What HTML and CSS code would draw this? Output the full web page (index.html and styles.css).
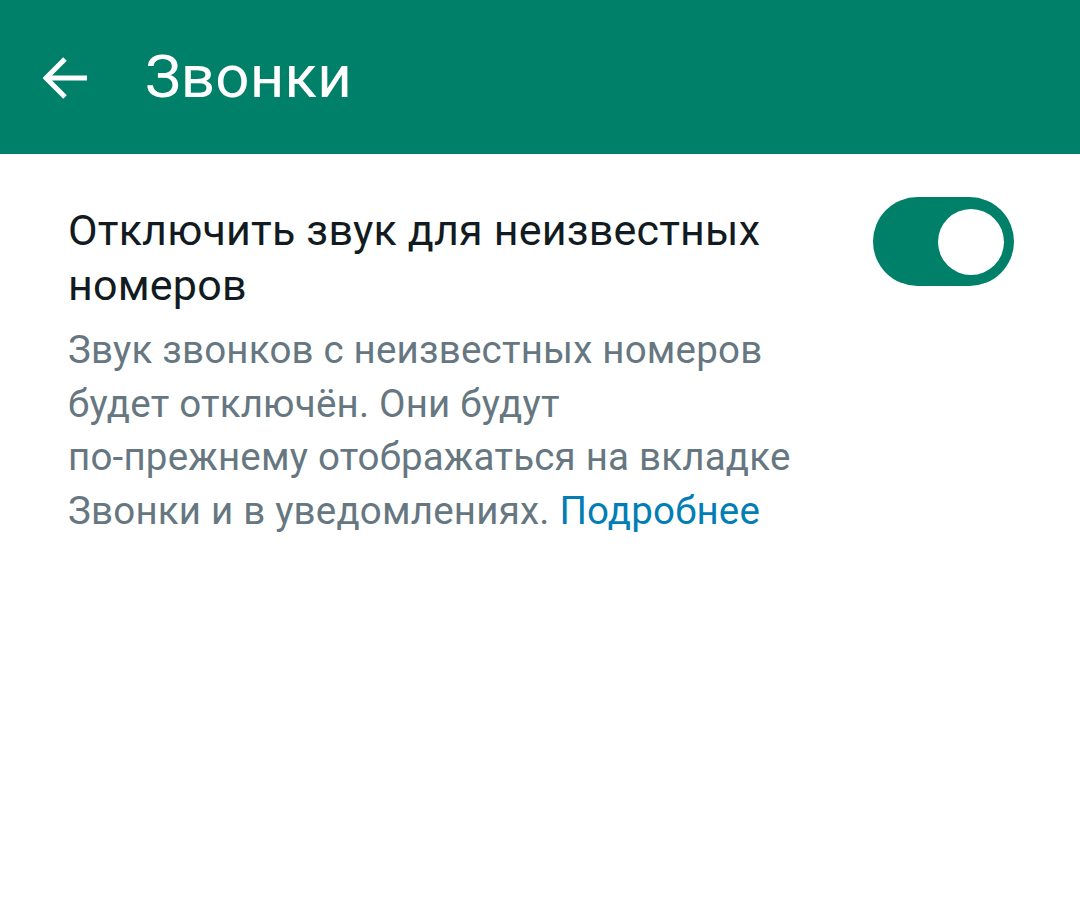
FILE: index.html
```html
<!DOCTYPE html>
<html lang="ru">
<head>
<meta charset="utf-8">
<link rel="stylesheet" href="styles.css">
</head>
<body>
<header class="appbar">
  <svg class="back" width="46" height="44" viewBox="0 0 46 44" aria-hidden="true">
    <path d="M44 22H4 M22 3L3 22L22 41" fill="none" stroke="#fff" stroke-width="5" stroke-linecap="butt" stroke-linejoin="miter"/>
  </svg>
  <h1 class="title">Звонки</h1>
</header>
<main class="content">
  <div class="setting">
    <div class="texts">
      <div class="setting-title">Отключить звук для неизвестных<br>номеров</div>
      <div class="setting-desc">Звук звонков с неизвестных номеров<br>будет отключён. Они будут<br>по-прежнему отображаться на вкладке<br>Звонки и в уведомлениях. <span class="link">Подробнее</span></div>
    </div>
    <div class="switch"><div class="thumb"></div></div>
  </div>
</main>
</body>
</html>
```

FILE: styles.css
```css
* { box-sizing: border-box; }
html, body { margin: 0; padding: 0; background: #fff; }
body { font-family: Roboto, "Noto Sans", sans-serif; }

.appbar {
  height: 154px;
  background: #008069;
  display: flex;
  align-items: center;
  padding-left: 43px;
}
.back { display: block; flex: none; margin-top: 2px; }
.title {
  margin: 0 0 0 56px;
  color: #fff;
  font-weight: 400;
  font-size: 60px;
  line-height: 1;
  letter-spacing: 0.2px;
}

.content { padding: 49px 66px 0 68px; }
.setting { display: flex; justify-content: space-between; align-items: flex-start; }
.texts { flex: 1; }
.setting-title {
  color: #111b21;
  font-size: 43px;
  line-height: 55px;
  letter-spacing: 0.2px;
}
.setting-desc {
  margin-top: 10px;
  color: #667781;
  font-size: 38.5px;
  line-height: 53.5px;
  letter-spacing: 0.2px;
}
.link { color: #027eb5; }

.switch {
  flex: none;
  width: 141px;
  height: 89px;
  border-radius: 45px;
  background: #008069;
  margin-top: -6px;
  display: flex;
  align-items: center;
  justify-content: flex-end;
  padding-right: 10px;
}
.thumb {
  width: 66px;
  height: 66px;
  border-radius: 50%;
  background: #fff;
}
```
